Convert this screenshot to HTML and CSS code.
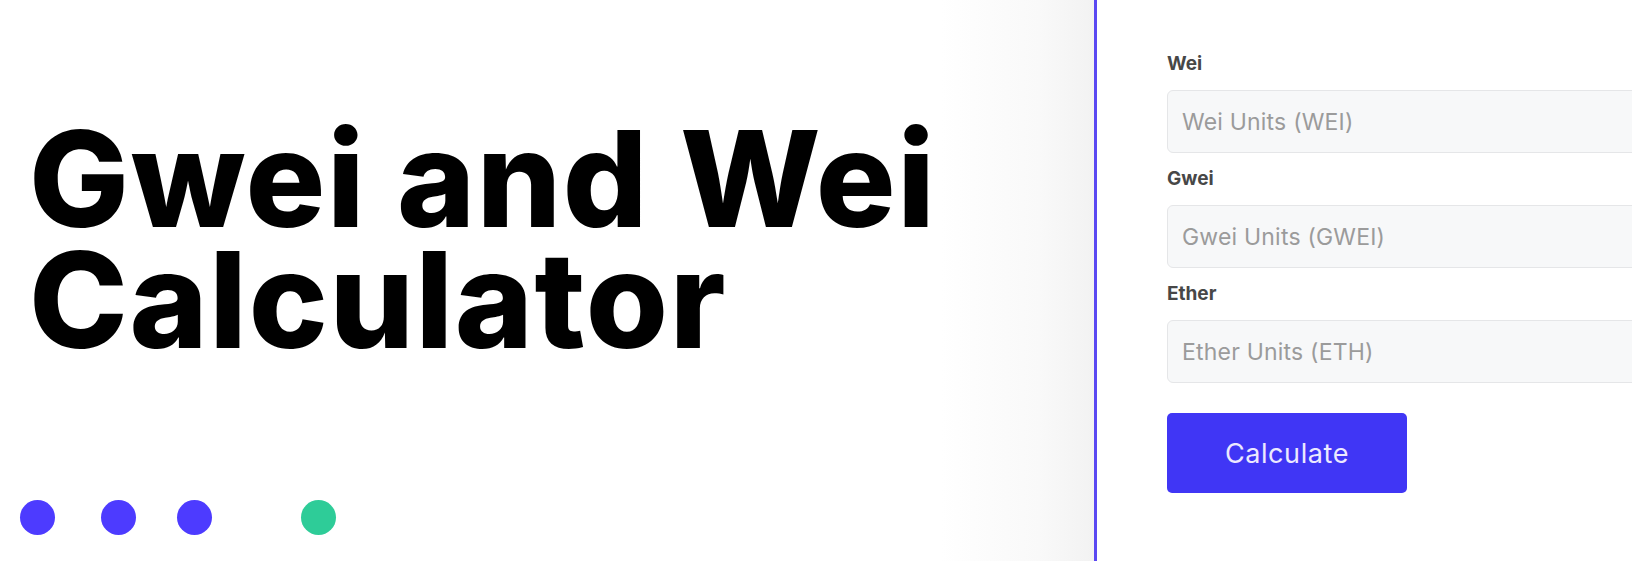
FILE: index.html
```html
<!DOCTYPE html>
<html lang="en">
<head>
<meta charset="utf-8">
<title>Gwei and Wei Calculator</title>
<link rel="stylesheet" href="styles.css">
</head>
<body>
<div class="page">
  <section class="hero">
    <h1 class="title"><span class="title-line">Gwei and Wei</span><span class="title-line">Calculator</span></h1>
    <div class="dots">
      <span class="dot dot-1"></span>
      <span class="dot dot-2"></span>
      <span class="dot dot-3"></span>
      <span class="dot dot-green"></span>
    </div>
  </section>
  <section class="panel">
    <form class="calc">
      <div class="field">
        <label class="label" for="wei">Wei</label>
        <input class="input" id="wei" type="text" placeholder="Wei Units (WEI)">
      </div>
      <div class="field">
        <label class="label" for="gwei">Gwei</label>
        <input class="input" id="gwei" type="text" placeholder="Gwei Units (GWEI)">
      </div>
      <div class="field">
        <label class="label" for="eth">Ether</label>
        <input class="input" id="eth" type="text" placeholder="Ether Units (ETH)">
      </div>
      <button class="btn" type="button">Calculate</button>
    </form>
  </section>
</div>
</body>
</html>
```
FILE: styles.css
```css
html, body {
  margin: 0;
  padding: 0;
  height: 100%;
  overflow: hidden;
  background: #ffffff;
  font-family: Inter, "Liberation Sans", sans-serif;
}

.page {
  display: flex;
  height: 561px;
}

.hero {
  width: 1094px;
  flex: none;
  padding-left: 29px;
  box-sizing: border-box;
  background: linear-gradient(to right, #ffffff 0%, #ffffff 86%, #f9f9f9 95%, #f2f2f2 100%);
}

.title {
  margin: 118px 0 0 0;
  font-family: Inter, "Liberation Sans", sans-serif;
  font-weight: 800;
  font-size: 133px;
  line-height: 121px;
  letter-spacing: 1.6px;
  color: #000000;
}

.title-line {
  display: block;
  height: 121px;
}

.dots {
  display: flex;
  margin-top: 140px;
  margin-left: -9px;
}

.dot {
  width: 35px;
  height: 35px;
  border-radius: 50%;
  background: #4d3bff;
  flex: none;
}

.dot-2 { margin-left: 46px; }
.dot-3 { margin-left: 41px; }
.dot-green {
  margin-left: 89px;
  background: #2ecc98;
}

.panel {
  flex: 1;
  border-left: 3px solid #5a48f2;
  background: #ffffff;
  overflow: hidden;
}

.calc {
  padding: 52px 0 0 70px;
  width: 620px;
}

.field {
  display: flex;
  flex-direction: column;
  margin-bottom: 14px;
}

.label {
  font-size: 19px;
  line-height: 24px;
  font-weight: 700;
  color: #474747;
  margin-bottom: 14px;
}

.input {
  height: 63px;
  box-sizing: border-box;
  border: 1.5px solid #e5e6e8;
  border-radius: 6px;
  background: #f7f8f9;
  padding: 0 14px;
  font-family: Inter, "Liberation Sans", sans-serif;
  font-size: 23px;
  letter-spacing: 0.2px;
  color: #333;
  outline: none;
}

.input::placeholder {
  color: #9b9b9b;
}

.btn {
  margin-top: 16px;
  width: 240px;
  height: 80px;
  border: none;
  border-radius: 5px;
  background: #4036f5;
  color: #ece9ff;
  font-family: Inter, "Liberation Sans", sans-serif;
  font-size: 27px;
  letter-spacing: 0.6px;
  font-weight: 400;
  cursor: pointer;
}
```
